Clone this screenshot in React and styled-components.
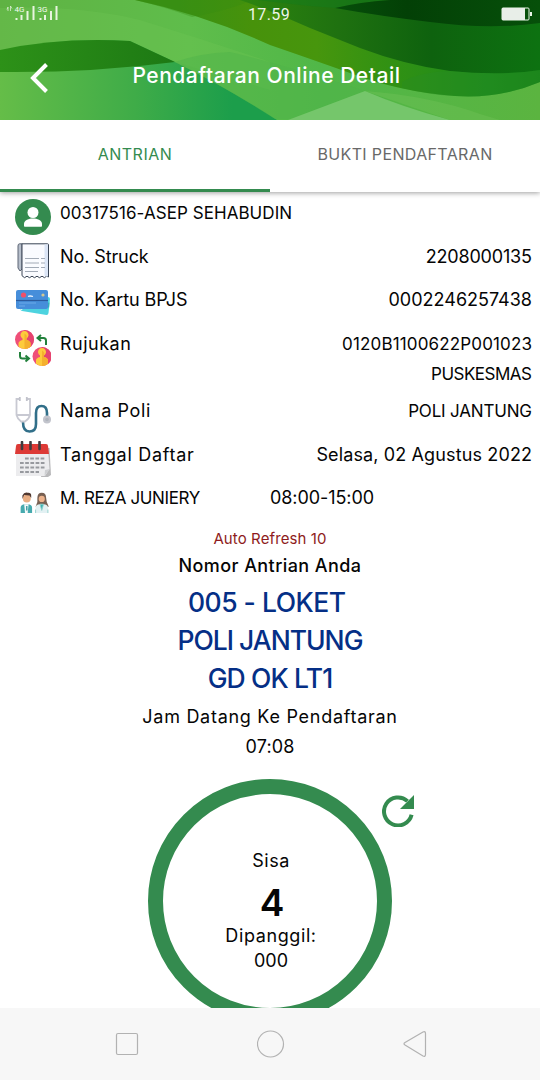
import React from "react";
import styled, { createGlobalStyle } from "styled-components";

const Global = createGlobalStyle`
  *{box-sizing:border-box}
  body{margin:0;background:#fff;font-family:Inter,"Open Sans",sans-serif;color:#050505}
  svg{display:block}
`;
const green = "#348b4f";
const Screen = styled.div`
  width:540px;height:1080px;display:flex;flex-direction:column;overflow:hidden;background:#fff;
`;
const Header = styled.header`
  position:relative;height:120px;flex:none;color:#fff;
`;
const Waves = styled.svg`
  position:absolute;inset:0;z-index:0;
`;
const StatusBar = styled.div`
  position:relative;height:28px;padding:0 8px 0 6px;display:grid;grid-template-columns:1fr auto 1fr;align-items:center;
`;
const Clock = styled.span`
  font:16px Roboto,sans-serif;letter-spacing:.4px;color:#eef6e8;
`;
const BatteryIcon = styled.svg`justify-self:end;`;
const TitleBar = styled.div`
  position:relative;height:96px;display:grid;grid-template-columns:80px 1fr 80px;align-items:center;
`;
const BackIcon = styled.svg`margin-left:28px;margin-top:4px;`;
const Title = styled.h1`
  margin:0 -12px;text-align:center;font-size:21px;font-weight:500;letter-spacing:${p => p.$ls}px;line-height:30px;padding:0 7px 1px 0;white-space:nowrap;
`;
const Tabs = styled.nav`
  position:relative;display:flex;height:72px;flex:none;background:#fff;box-shadow:0 1px 5px rgba(0,0,0,.38);clip-path:inset(0 0 -10px 0);
`;
const Tab = styled.div`
  flex:1;text-align:center;line-height:68px;font-size:16px;letter-spacing:${p => p.$ls}px;
  color:${p => (p.$active ? green : "#686868")};
  border-bottom:3px solid ${p => (p.$active ? green : "transparent")};
`;
const Content = styled.main`
  flex:1;min-height:0;overflow:hidden;padding-top:6px;
`;
const Row = styled.div`
  display:flex;padding:0 8px 7.5px 15px;font-size:18px;line-height:30px;
`;
const IconSlot = styled.div`
  width:36px;height:36px;margin:1px 9px -1px 0;flex:none;
`;
const Label = styled.div`
  width:210px;white-space:nowrap;font-size:${p => (p.$caps ? 17 : 18)}px;letter-spacing:${p => p.$ls || 0}px;
`;
const Value = styled.div`
  flex:1;text-align:${p => (p.$left ? "left" : "right")};white-space:nowrap;
`;
const Line = styled.div`
  height:30px;font-size:${p => (p.$caps ? 17 : 18)}px;letter-spacing:${p => p.$ls || 0}px;margin-right:${p => -(p.$ls || 0)}px;
`;
const Queue = styled.section`
  display:flex;flex-direction:column;align-items:center;font-size:18px;line-height:30px;white-space:nowrap;
`;
const Refreshing = styled.div`
  font-size:15px;line-height:24px;color:#8e1b20;letter-spacing:${p => p.$ls}px;
`;
const Caption = styled.div`
  font-weight:${p => (p.$strong ? 500 : 400)};letter-spacing:${p => p.$ls || 0}px;
`;
const Desk = styled.div`
  padding:2px 0 5px;display:flex;flex-direction:column;align-items:center;
`;
const DeskLine = styled.div`
  font-size:26.5px;font-weight:500;line-height:38px;color:#052f86;letter-spacing:${p => p.$ls}px;
`;
const Counter = styled.div`
  position:relative;margin-top:17px;width:244px;height:244px;flex:none;border:15px solid ${green};border-radius:50%;
  display:flex;flex-direction:column;align-items:center;padding:54px 0 0 2px;line-height:25px;
`;
const Remaining = styled.div`
  font-size:37px;font-weight:600;line-height:48px;margin:6px 0 -4px;padding-left:2px;
`;
const Reload = styled.svg`
  position:absolute;left:219px;top:1px;
`;
const NavBar = styled.footer`
  height:72px;flex:none;background:#f7f7f7;display:flex;justify-content:space-between;align-items:center;padding:0 112px 0 115px;
`;

const HeaderWaves = () => (
  <Waves width="540" height="120" viewBox="0 0 540 120">
    <defs>
      <linearGradient id="base"><stop offset="0" stopColor="#65bd48" /><stop offset=".25" stopColor="#3fac48" /><stop offset=".43" stopColor="#1c9e4b" /><stop offset="1" stopColor="#1c9e4b" /></linearGradient>
      <linearGradient id="band"><stop offset="0" stopColor="#5fb243" /><stop offset=".35" stopColor="#5fbd4b" /><stop offset=".6" stopColor="#50b748" /><stop offset="1" stopColor="#5bb440" /></linearGradient>
      <linearGradient id="leaf"><stop offset="0" stopColor="#2d9118" /><stop offset="1" stopColor="#1d7914" /></linearGradient>
      <linearGradient id="olive" gradientUnits="userSpaceOnUse" x1="180" y1="0" x2="540" y2="0"><stop offset="0" stopColor="#3a9114" /><stop offset=".2" stopColor="#47920b" /><stop offset=".38" stopColor="#47960d" /><stop offset=".55" stopColor="#349212" /><stop offset=".85" stopColor="#1d8b1c" /><stop offset="1" stopColor="#168317" /></linearGradient>
      <linearGradient id="deep" gradientUnits="userSpaceOnUse" x1="230" y1="0" x2="540" y2="0"><stop offset="0" stopColor="#2f870f" /><stop offset=".35" stopColor="#1f7110" /><stop offset=".65" stopColor="#0e620e" /><stop offset="1" stopColor="#0d7211" /></linearGradient>
      <linearGradient id="night"><stop offset="0" stopColor="#064f0a" /><stop offset=".35" stopColor="#034006" /><stop offset="1" stopColor="#06500a" /></linearGradient>
    </defs>
    <path fill="url(#base)" d="M0 0H540V120H0z" />
    <path fill="url(#band)" d="M0 0H540V120H277Q224 86 175 62L130 41Q60 37 0 50z" />
    <path fill="#70c657" opacity=".3" d="M0 8Q80 5 140 20Q205 40 270 62V90L175 62L130 41Q60 37 0 50z" />
    <path fill="#4fb34a" opacity=".5" d="M175 62Q200 53 230 52Q290 66 365 91L290 119H275Q220 84 175 62z" />
    <path fill="url(#leaf)" d="M0 50Q60 37 130 41L175 62Q90 73 0 72z" />
    <path fill="url(#olive)" d="M135 0H540V82Q500 99 455 96Q400 92 350 73Q305 57 270 45Q205 15 135 0z" />
    <path fill="#378d11" opacity=".35" d="M135 0H252Q230 10 192 17Q165 7 135 0z" />
    <path fill="url(#deep)" d="M240 0H540V70Q500 76 450 71Q405 65 360 48Q330 36 310 28Q275 12 240 0z" />
    <path fill="#147b1c" opacity=".5" d="M258 0H390Q360 2 336 8Q295 5 258 0z" />
    <path fill="#278d24" opacity=".35" d="M402 82Q420 72 450 71Q500 76 540 70V82Q500 99 455 96Q430 95 402 88z" />
    <path fill="url(#night)" d="M335 8Q360 2 390 0H540V23Q490 30 430 22Q380 16 335 8z" />
    <path fill="#75c66b" d="M288 120L365 91Q402 107 450 120z" />
    <path fill="#6ec256" opacity=".45" d="M365 91Q430 96 480 114L500 120H450z" />
  </Waves>
);
const Signal = () => (
  <svg width="54" height="24" viewBox="0 0 54 24">
    <g fill="none" stroke="#e8f4df" strokeWidth="1">
      <path d="M2 5l-1 2.500M2 5v4M4.500 4v5M4.500 4l1.500 2.500" opacity=".7" />
      <path d="M10.500 16v2M15.500 13v5M21.500 9v9M27.500 4v14M34.500 16v2M39 13v5M45 9v9M50.500 4v14" strokeWidth="2" />
    </g>
    <g fill="#f3faee" fontFamily="Roboto,sans-serif" fontSize="8"><text x="8.500" y="9.500">4G</text><text x="31.500" y="9.500">3G</text></g>
  </svg>
);
const Person = () => (
  <svg width="36" height="36" viewBox="0 0 36 36"><circle cx="18" cy="18" r="18" fill={green} /><circle cx="18" cy="13.500" r="5.500" fill="#fff" /><path d="M9 27v-2c0-4 5-5.500 9-5.500s9 1.500 9 5.500v2q0 .7-.8.7H9.800q-.8 0-.8-.7z" fill="#fff" /></svg>
);
const Receipt = () => (
  <svg width="36" height="36" viewBox="0 0 36 36">
    <path d="M7 .8H4.500Q3 .8 3 3v22l2 3 2-2z" fill="#b7bfcb" stroke="#5c6575" />
    <path d="M7 .8H32.500q1 0 1 1V34l-2-.8-2 1.500-2.500-1.500-2.500 1.500-2.500-1.500-2.500 1.500-2.500-1.500-2.500 1.500-2.500-1.500-2.500 1.500-2.500-2z" fill="#fafbff" stroke="#384354" />
    <path d="M29.500 1.500h3.500v32l-3.500-.5z" fill="#dbe5f6" />
    <path d="M10 15.500h14M26 15.500h4M10 20h14M26 20h4M10 24.500h14M26 24.500h4M10 28.500h13" stroke="#a2aab6" />
  </svg>
);
const Cards = () => (
  <svg width="36" height="36" viewBox="0 0 36 36">
    <path d="M6 24l27-13q2 .2 2 2l-1.500 14q-.2 2-2 2L7 25q-2-.2-2-3z" fill="#4dd3df" /><path d="M4.500 20.500l30-4-.4 5-29-1z" fill="#33aebc" />
    <rect x="1" y="4" width="32" height="19" rx="2" fill="#468eda" /><path d="M1 14.500h32" stroke="#2b5a9d" strokeWidth="1.200" /><path d="M4 17h17M4 20h6" stroke="#75b3ec" strokeWidth=".8" />
    <circle cx="8.500" cy="9" r="2.600" fill="#ef506a" /><path d="M13 10.500q2-1 5 0" fill="none" stroke="#e7f2ff" strokeWidth="1.300" /><circle cx="28" cy="9" r="1.600" fill="#d5c992" />
  </svg>
);
const Portrait = ({ x, y }) => (
  <g transform={`translate(${x} ${y})`}><circle r="9.500" fill="#ef4f78" /><path d="M0-9.500a9.500 9.500 0 010 19z" fill="#e6436f" /><path d="M-6 7.200V4q0-2.500 4-3.500v-1.500a4 4 0 114 0V.500q4 1 4 3.500v3.200Q3 9.500 0 9.500T-6 7.200z" fill="#fdcb3c" /><path d="M0-6a4 4 0 012 5V.500q4 1 4 3.500v3.200Q3 9.500 0 9.500z" fill="#f4b02e" /></g>
);
const Referral = () => (
  <svg width="36" height="36" viewBox="0 0 36 36"><Portrait x={9.500} y={9.500} /><Portrait x={27} y={26.500} /><path d="M31 15V10.500Q31 8 28.500 8H23M26 5l-3.500 3 3.500 3M5 22v4q0 2.500 2.500 2.500H14M10.500 25.500l3.500 3-3.500 3" fill="none" stroke="#23813c" strokeWidth="2" /></svg>
);
const Stethoscope = () => (
  <svg width="36" height="36" viewBox="0 0 36 36" fill="none">
    <path d="M8 25q0 9.500 6.500 9.500T21 27V16q0-7 5.500-7T32 16v4" stroke="#316f89" strokeWidth="2.600" />
    <path d="M5 2H1.500v16q1 4 4.500 6.500h4Q14 22 15 18V2h-3.500M2 18h13" stroke="#c8c9d2" strokeWidth="1.800" /><path d="M4.800 0v4M11.800 0v4" stroke="#c1c2cb" strokeWidth="1.800" />
    <circle cx="32" cy="22.500" r="4" fill="#c2c4cc" /><circle cx="32" cy="22.500" r="1.800" fill="#afb4bd" />
  </svg>
);
const Calendar = () => (
  <svg width="36" height="36" viewBox="0 0 36 36">
    <path d="M31 7h3.500L36 34l-3 2h-7z" fill="#b9b9bb" /><path d="M1 8h32l1.500 20-4.500 7H1z" fill="#ececee" /><path d="M29.500 35l.5-6 5-1z" fill="#cecfd2" />
    <path d="M1 5q0-2 2-2h28q2 0 2 2l1 8H0z" fill="#dd3a36" />
    <path d="M7 1v7M15.500 1v7M24.500 1v7" stroke="#3d3c40" strokeWidth="2.600" strokeLinecap="round" />
    <path d="M10 17.500h20M5 22h25M5 26.500h25M5 31h19" stroke="#97999e" strokeWidth="2" strokeDasharray="3.700 1.500" />
  </svg>
);
const Doctors = () => (
  <svg width="36" height="36" viewBox="-2 1 36 36">
    <g transform="translate(1 4.500) scale(.88)">
      <path d="M3 29v-6q0-4 5-4h3q5 0 5 4v6z" fill="#46aaae" /><path d="M7 19h5l-1 10H8z" fill="#f6f9fa" /><path d="M10 21v5" stroke="#2c9298" strokeWidth="1.500" /><circle cx="10" cy="12.500" r="4.500" fill="#e8ad83" /><path d="M5 13V9q2-4 6-3 4-.5 4 3v3l-2-3-6-.5z" fill="#503830" />
      <path d="M20 22q3-5 2-10 0-6 5-6t5 6q0 5 3 10z" fill="#786052" /><circle cx="27" cy="13" r="3.500" fill="#edb38c" /><path d="M20 29v-6q0-4 5-4h4q5 0 5 4v6z" fill="#e3f1f3" /><path d="M25 19h4l-2 7zM20 25v4M34 25v4" fill="#3ab1b0" stroke="#8ccfcb" />
    </g>
  </svg>
);

const rows = [
  { icon: Person, label: "00317516-ASEP SEHABUDIN", ls: 0.06, caps: true, values: [] },
  { icon: Receipt, label: "No. Struck", ls: -0.1, values: [{ text: "2208000135", ls: -0.18 }] },
  { icon: Cards, label: "No. Kartu BPJS", ls: -0.1, values: [{ text: "0002246257438", ls: 0 }] },
  { icon: Referral, label: "Rujukan", ls: 0.5, values: [{ text: "0120B1100622P001023", ls: 0.15, caps: true }, { text: "PUSKESMAS", ls: -0.5, caps: true }] },
  { icon: Stethoscope, label: "Nama Poli", ls: 0.6, values: [{ text: "POLI JANTUNG", ls: -0.18, caps: true }] },
  { icon: Calendar, label: "Tanggal Daftar", ls: 0.7, values: [{ text: "Selasa, 02 Agustus 2022", ls: 0.13 }] },
  { icon: Doctors, label: "M. REZA JUNIERY", ls: -0.37, caps: true, left: true, values: [{ text: "08:00-15:00", ls: -0.08 }] },
];

export default function App() {
  return (
    <Screen>
      <Global />
      <Header>
        <HeaderWaves />
        <StatusBar>
          <Signal /><Clock>17.59</Clock>
          <BatteryIcon width="31" height="16" viewBox="0 0 31 16"><rect x="1" y="2" width="27" height="12" rx="1" fill="none" stroke="#eaf6e8" /><path d="M1 2h23v12H1z" fill="#e8eee8" /><path d="M29 6h2v4h-2z" fill="#eaf6e8" /></BatteryIcon>
        </StatusBar>
        <TitleBar>
          <BackIcon width="22" height="32" viewBox="0 0 22 32"><path d="M18.500 2.500L5 16l13.500 13.500" fill="none" stroke="#fff" strokeWidth="4" /></BackIcon>
          <Title $ls={0.53}>Pendaftaran Online Detail</Title>
        </TitleBar>
      </Header>
      <Tabs><Tab $active $ls={0.5}>ANTRIAN</Tab><Tab $ls={0.36}>BUKTI PENDAFTARAN</Tab></Tabs>
      <Content>
        {rows.map(({ icon: Icon, label, ls, caps, left, values }) => (
          <Row key={label}>
            <IconSlot><Icon /></IconSlot>
            <Label $ls={ls} $caps={caps}>{label}</Label>
            <Value $left={left}>{values.map(v => <Line key={v.text} $ls={v.ls} $caps={v.caps}>{v.text}</Line>)}</Value>
          </Row>
        ))}
        <Queue>
          <Refreshing $ls={0.1}>Auto Refresh 10</Refreshing>
          <Caption $strong $ls={0.42}>Nomor Antrian Anda</Caption>
          <Desk><DeskLine $ls={-0.5}>005 - LOKET&nbsp;</DeskLine><DeskLine $ls={-1}>POLI JANTUNG</DeskLine><DeskLine $ls={-0.85}>GD OK LT1</DeskLine></Desk>
          <Caption $ls={0.72}>Jam Datang Ke Pendaftaran</Caption>
          <Caption $ls={0.1}>07:08</Caption>
          <Counter>
            <Caption $ls={0.5}>Sisa</Caption>
            <Remaining>4</Remaining>
            <Caption $ls={0.6}>Dipanggil:</Caption>
            <Caption $ls={0}>000</Caption>
            <Reload width="32" height="32" viewBox="0 0 32 32"><path d="M29.600 19.800A14 14 0 1125.500 6.100" fill="none" stroke={green} strokeWidth="4" /><path d="M32 0v14H18z" fill={green} /></Reload>
          </Counter>
        </Queue>
      </Content>
      <NavBar>
        <svg width="24" height="24" viewBox="0 0 24 24"><rect x="1.500" y="1.500" width="21" height="21" rx="1.500" fill="none" stroke="#b2b2b2" strokeWidth="1.200" /></svg>
        <svg width="28" height="28" viewBox="0 0 28 28"><circle cx="13.500" cy="14" r="13" fill="none" stroke="#b2b2b2" strokeWidth="1.200" /></svg>
        <svg width="26" height="28" viewBox="0 0 26 28"><path d="M21 2L3 12.500q-2 1.300 0 2.600L21 26q2.500 1 2.500-1.500v-21Q23.500 1 21 2z" fill="none" stroke="#b2b2b2" strokeWidth="1.200" /></svg>
      </NavBar>
    </Screen>
  );
}
